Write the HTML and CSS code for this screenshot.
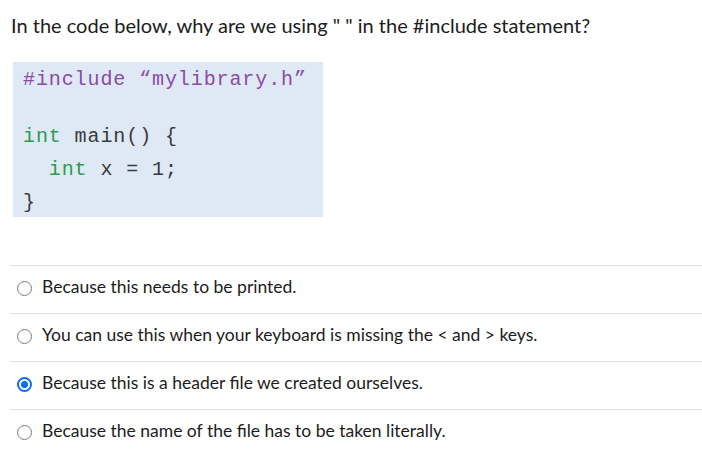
FILE: index.html
```html
<!DOCTYPE html>
<html>
<head>
<meta charset="utf-8">
<link rel="stylesheet" href="styles.css">
</head>
<body>
<div class="question">
  <p class="prompt">In the code below, why are we using " " in the #include statement?</p>
  <div class="code">
    <div class="line first"><span class="pp">#include “mylibrary.h”</span></div>
    <div class="blank"></div>
    <div class="line"><span class="kw">int</span> main() {</div>
    <div class="line">  <span class="kw">int</span> x = 1;</div>
    <div class="line last">}</div>
  </div>
  <div class="answers">
    <label class="answer"><span class="radio"></span><span class="text">Because this needs to be printed.</span></label>
    <label class="answer"><span class="radio"></span><span class="text">You can use this when your keyboard is missing the &lt; and &gt; keys.</span></label>
    <label class="answer"><span class="radio checked"></span><span class="text">Because this is a header file we created ourselves.</span></label>
    <label class="answer"><span class="radio"></span><span class="text">Because the name of the file has to be taken literally.</span></label>
  </div>
</div>
</body>
</html>
```

FILE: styles.css
```css
html, body {
  margin: 0;
  padding: 0;
  background: #ffffff;
}
body {
  font-family: Lato, "Liberation Sans", sans-serif;
  color: #1c1c1c;
  width: 702px;
  height: 450px;
  overflow: hidden;
}
.question {
  padding-top: 12px;
}
.prompt {
  margin: 0 0 0 11px;
  font-size: 20px;
  line-height: 26px;
  height: 26px;
}
.code {
  margin: 24px 0 0 13px;
  width: 300px;
  padding: 3px 0 0 10px;
  background: #dfe9f5;
  font-family: "Liberation Mono", "Courier New", monospace;
  font-size: 20px;
  letter-spacing: 0.9px;
  color: #3a3a3a;
}
.line {
  white-space: pre;
  line-height: 33px;
  height: 33px;
}
.line.first {
  line-height: 30px;
  height: 30px;
}
.line.last {
  height: 31px;
}
.blank {
  height: 25px;
}
.pp {
  color: #8b4aa6;
}
.kw {
  color: #2d9b4c;
}
.answers {
  margin: 48px 0 0 10px;
}
.answer {
  display: flex;
  align-items: center;
  height: 47px;
  border-top: 1px solid #dedede;
  font-size: 17.5px;
  line-height: 20px;
}
.radio {
  box-sizing: border-box;
  width: 15px;
  height: 15px;
  margin: 0 10px 2px 7px;
  border: 1px solid #7a7a7a;
  border-radius: 50%;
  background: #fff;
  flex: none;
}
.radio.checked {
  border: 2px solid #0b6ff0;
  background: radial-gradient(circle, #0b6ff0 0, #0b6ff0 3.3px, #ffffff 3.8px);
}
.text {
  margin-bottom: 5px;
}
```
